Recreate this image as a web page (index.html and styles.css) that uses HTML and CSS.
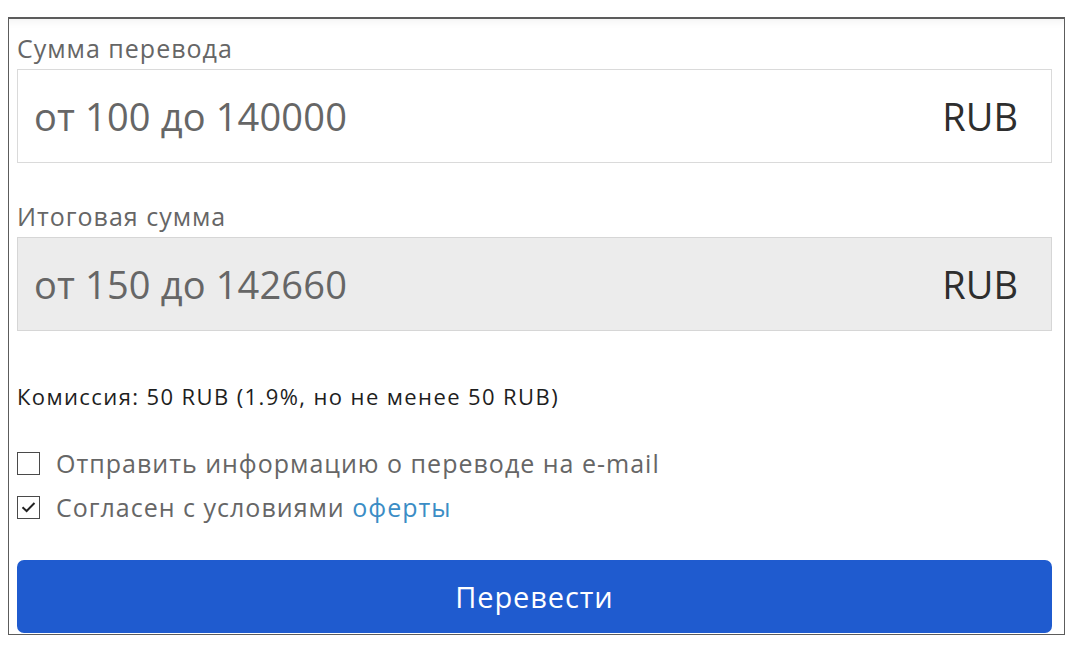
FILE: index.html
```html
<!DOCTYPE html>
<html lang="ru">
<head>
  <meta charset="UTF-8" />
  <meta name="viewport" content="width=device-width, initial-scale=1.0" />
  <title>Перевод</title>
  <link rel="stylesheet" href="styles.css">
</head>
<body>
  <form class="transfer">
    <label class="field-label" for="amount">Сумма перевода</label>
    <div class="field">
      <input type="text" id="amount" placeholder="от 100 до 140000" />
      <span class="currency">RUB</span>
    </div>

    <label class="field-label second" for="total">Итоговая сумма</label>
    <div class="field readonly">
      <input type="text" id="total" placeholder="от 150 до 142660" readonly />
      <span class="currency">RUB</span>
    </div>

    <p class="fee">Комиссия: 50 RUB (1.9%, но не менее 50 RUB)</p>

    <div class="options">
      <label class="option">
        <span class="box"></span>
        Отправить информацию о переводе на e-mail
      </label>
      <label class="option">
        <span class="box">
          <svg width="15" height="12" viewBox="0 0 15 12"><path d="M1.5 6.2 L5.6 10 L13.5 2" fill="none" stroke="#222" stroke-width="2"/></svg>
        </span>
        Согласен с условиями&nbsp;<a href="#">оферты</a>
      </label>
    </div>

    <button type="button" class="submit">Перевести</button>
  </form>
</body>
</html>
```

FILE: styles.css
```css
body {
  margin: 0;
  font-family: "Open Sans", "Noto Sans", sans-serif;
  background: #fff;
}
.transfer {
  box-sizing: border-box;
  width: 1057px;
  height: 618px;
  margin: 17px 0 0 8px;
  padding: 13px 12px 0 8px;
  border: 1px solid #5c5c5c;
  border-top-width: 2px;
  box-shadow: inset 0 10px 10px -8px rgba(0, 0, 0, 0.06);
  display: flex;
  flex-direction: column;
}
.field-label {
  display: block;
  font-size: 25px;
  line-height: 32px;
  letter-spacing: 1px;
  color: #666;
  margin-bottom: 5px;
}
.field-label.second {
  margin-top: 37px;
  margin-bottom: 5px;
}
.field {
  box-sizing: border-box;
  height: 94px;
  display: flex;
  align-items: center;
  padding: 0 33px 0 16px;
  border: 1px solid #dadada;
  background: #fff;
}
.field.readonly {
  background: #ececec;
  border-color: #d6d6d6;
}
.field input {
  flex: 1;
  min-width: 0;
  border: none;
  outline: none;
  background: transparent;
  padding: 0;
  font-family: inherit;
  font-size: 38px;
  letter-spacing: 0.15px;
  color: #333;
}
.field input::placeholder {
  color: #666;
  opacity: 1;
}
.currency {
  font-size: 38px;
  color: #2e2e2e;
}
.fee {
  margin: 51px 0 0;
  font-size: 22px;
  line-height: 28px;
  letter-spacing: 1.4px;
  color: #1e1e1e;
}
.options {
  margin-top: 31px;
  display: flex;
  flex-direction: column;
}
.option {
  display: flex;
  align-items: center;
  height: 44px;
  font-size: 25px;
  letter-spacing: 1px;
  color: #666;
}
.box {
  box-sizing: border-box;
  width: 23px;
  height: 23px;
  border: 1px solid #4a4a4a;
  margin-right: 16px;
  display: flex;
  align-items: center;
  justify-content: center;
  flex: none;
}
.option a {
  color: #3b8dc5;
  text-decoration: none;
}
.submit {
  margin-top: 31px;
  height: 73px;
  width: 100%;
  border: none;
  border-radius: 7px;
  background: #1f5bcf;
  color: #fff;
  font-family: inherit;
  font-size: 29px;
  letter-spacing: 0.9px;
  cursor: pointer;
}
```
